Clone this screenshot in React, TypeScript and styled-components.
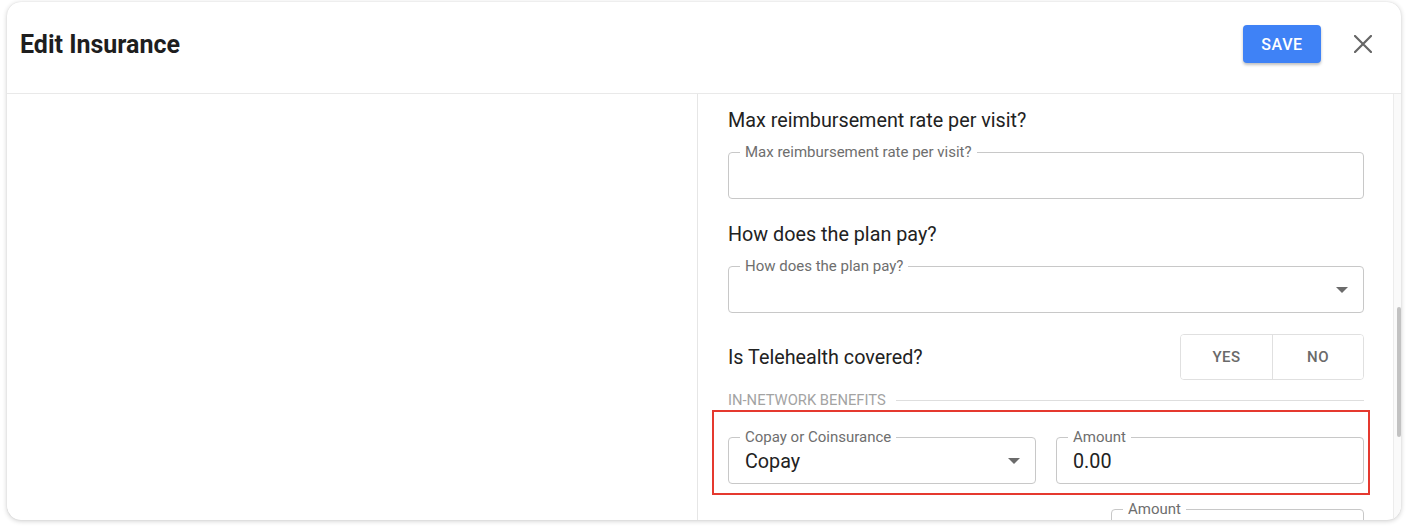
import styled, { createGlobalStyle } from "styled-components";

const GlobalStyle = createGlobalStyle`
  html, body {
    margin: 0;
    padding: 0;
    background: #ffffff;
    font-family: Roboto, "Noto Sans", "Liberation Sans", sans-serif;
  }
  * {
    box-sizing: border-box;
  }
`;

const Page = styled.div`
  padding: 2px 7px 10px 7px;
`;

const Card = styled.div`
  height: 518px;
  background: #fff;
  border-radius: 14px;
  box-shadow: 0 1px 5px rgba(0, 0, 0, 0.2), 0 0 1px rgba(0, 0, 0, 0.12);
  overflow: hidden;
  display: flex;
  flex-direction: column;
`;

const Header = styled.div`
  height: 92px;
  flex-shrink: 0;
  display: flex;
  align-items: center;
  justify-content: space-between;
  padding: 0 20px 7px 13px;
  border-bottom: 1px solid #e9e9e9;
`;

const Title = styled.h2`
  margin: 0;
  font-size: 25px;
  font-weight: 700;
  color: #1e1e1e;
`;

const Actions = styled.div`
  display: flex;
  align-items: center;
  gap: 24px;
`;

const SaveButton = styled.button`
  width: 78px;
  height: 38px;
  border: none;
  border-radius: 4px;
  background: #3f82f6;
  color: #fff;
  font-family: inherit;
  font-size: 16px;
  font-weight: 500;
  letter-spacing: 0.6px;
  box-shadow: 0 2px 3px rgba(0, 0, 0, 0.25);
`;

const CloseButton = styled.button`
  width: 36px;
  height: 36px;
  border: none;
  background: transparent;
  padding: 0;
  display: flex;
  align-items: center;
  justify-content: center;
`;

const Body = styled.div`
  flex: 1;
  min-height: 0;
  display: flex;
`;

const LeftPane = styled.div`
  width: 691px;
  flex-shrink: 0;
  border-right: 1px solid #e6e6e6;
`;

const RightPane = styled.div`
  flex: 1;
  min-height: 0;
  overflow: hidden;
  padding: 15px 29px 0 30px;
  display: flex;
  flex-direction: column;

  & > * {
    flex-shrink: 0;
  }
`;

const Scrollbar = styled.div`
  width: 8px;
  flex-shrink: 0;
  border-left: 1px solid #ececec;
  background: #fafafa;
  padding-top: 213px;
  display: flex;
  justify-content: flex-end;
`;

const Thumb = styled.div`
  width: 4px;
  height: 130px;
  border-radius: 2px;
  background: #c2c2c2;
`;

const Question = styled.div`
  font-size: 19.75px;
  line-height: 24px;
  color: #222;
  margin-bottom: 19px;
`;

const Field = styled.div<{ $mb?: number; $width?: number }>`
  position: relative;
  flex-shrink: 0;
  height: 47px;
  border: 1px solid #c8c8c8;
  border-radius: 4px;
  display: flex;
  align-items: center;
  padding: 0 16px;
  margin-bottom: ${(p) => p.$mb ?? 0}px;
  width: ${(p) => (p.$width ? `${p.$width}px` : "auto")};
`;

const FieldLabel = styled.span`
  position: absolute;
  top: -10px;
  left: 11px;
  padding: 0 5px;
  background: #fff;
  font-size: 15px;
  line-height: 18px;
  color: #6e6e6e;
  white-space: nowrap;
`;

const FieldValue = styled.span`
  flex: 1;
  font-size: 19.75px;
  color: #222;
  padding-top: 2px;
`;

const Caret = styled.svg`
  width: 12px;
  height: 6px;
  margin-right: -1px;
`;

const ToggleRow = styled.div`
  display: flex;
  align-items: center;
  justify-content: space-between;
  margin-bottom: 11px;
`;

const RowText = styled.span`
  font-size: 19.75px;
  color: #222;
`;

const ToggleGroup = styled.div`
  display: flex;
  border: 1px solid #e0e0e0;
  border-radius: 4px;
  overflow: hidden;
`;

const ToggleButton = styled.button`
  width: 91px;
  height: 44px;
  border: none;
  background: #fff;
  font-family: inherit;
  font-size: 15px;
  font-weight: 500;
  letter-spacing: 0.5px;
  color: #6a6a6a;

  & + & {
    border-left: 1px solid #e0e0e0;
  }
`;

const SectionHeading = styled.div`
  display: flex;
  align-items: center;
  gap: 10px;
  font-size: 14.75px;
  line-height: 17px;
  color: #a3a3a3;
  text-transform: uppercase;
  margin: 1px 0 1px;

  &::after {
    content: "";
    flex: 1;
    height: 1px;
    background: #dedede;
  }
`;

const Highlight = styled.div`
  margin: 0 -6px 14px -16px;
  padding: 25px 4px 9px 14px;
  border: 2px solid #e5392f;
`;

const FieldGrid = styled.div`
  display: grid;
  grid-template-columns: 308px 1fr;
  gap: 20px;
`;

const EndRow = styled.div`
  display: flex;
  justify-content: flex-end;
`;

function DropCaret() {
  return (
    <Caret viewBox="0 0 12 6">
      <path d="M0 0 L12 0 L6 6 Z" fill="#6b6b6b" />
    </Caret>
  );
}

function App() {
  return (
    <>
      <GlobalStyle />
      <Page>
        <Card>
          <Header>
            <Title>Edit Insurance</Title>
            <Actions>
              <SaveButton>SAVE</SaveButton>
              <CloseButton aria-label="close">
                <svg width="18" height="18" viewBox="0 0 18 18">
                  <path
                    d="M1 1 L17 17 M17 1 L1 17"
                    stroke="#666"
                    strokeWidth="2.2"
                    strokeLinecap="square"
                  />
                </svg>
              </CloseButton>
            </Actions>
          </Header>
          <Body>
            <LeftPane />
            <RightPane>
              <Question>Max reimbursement rate per visit?</Question>
              <Field $mb={24}>
                <FieldLabel>Max reimbursement rate per visit?</FieldLabel>
                <FieldValue />
              </Field>
              <Question>How does the plan pay?</Question>
              <Field $mb={21}>
                <FieldLabel>How does the plan pay?</FieldLabel>
                <FieldValue />
                <DropCaret />
              </Field>
              <ToggleRow>
                <RowText>Is Telehealth covered?</RowText>
                <ToggleGroup>
                  <ToggleButton>YES</ToggleButton>
                  <ToggleButton>NO</ToggleButton>
                </ToggleGroup>
              </ToggleRow>
              <SectionHeading>In-Network Benefits</SectionHeading>
              <Highlight>
                <FieldGrid>
                  <Field>
                    <FieldLabel>Copay or Coinsurance</FieldLabel>
                    <FieldValue>Copay</FieldValue>
                    <DropCaret />
                  </Field>
                  <Field>
                    <FieldLabel>Amount</FieldLabel>
                    <FieldValue>0.00</FieldValue>
                  </Field>
                </FieldGrid>
              </Highlight>
              <EndRow>
                <Field $width={253}>
                  <FieldLabel>Amount</FieldLabel>
                  <FieldValue />
                </Field>
              </EndRow>
            </RightPane>
            <Scrollbar>
              <Thumb />
            </Scrollbar>
          </Body>
        </Card>
      </Page>
    </>
  );
}

export default App;
